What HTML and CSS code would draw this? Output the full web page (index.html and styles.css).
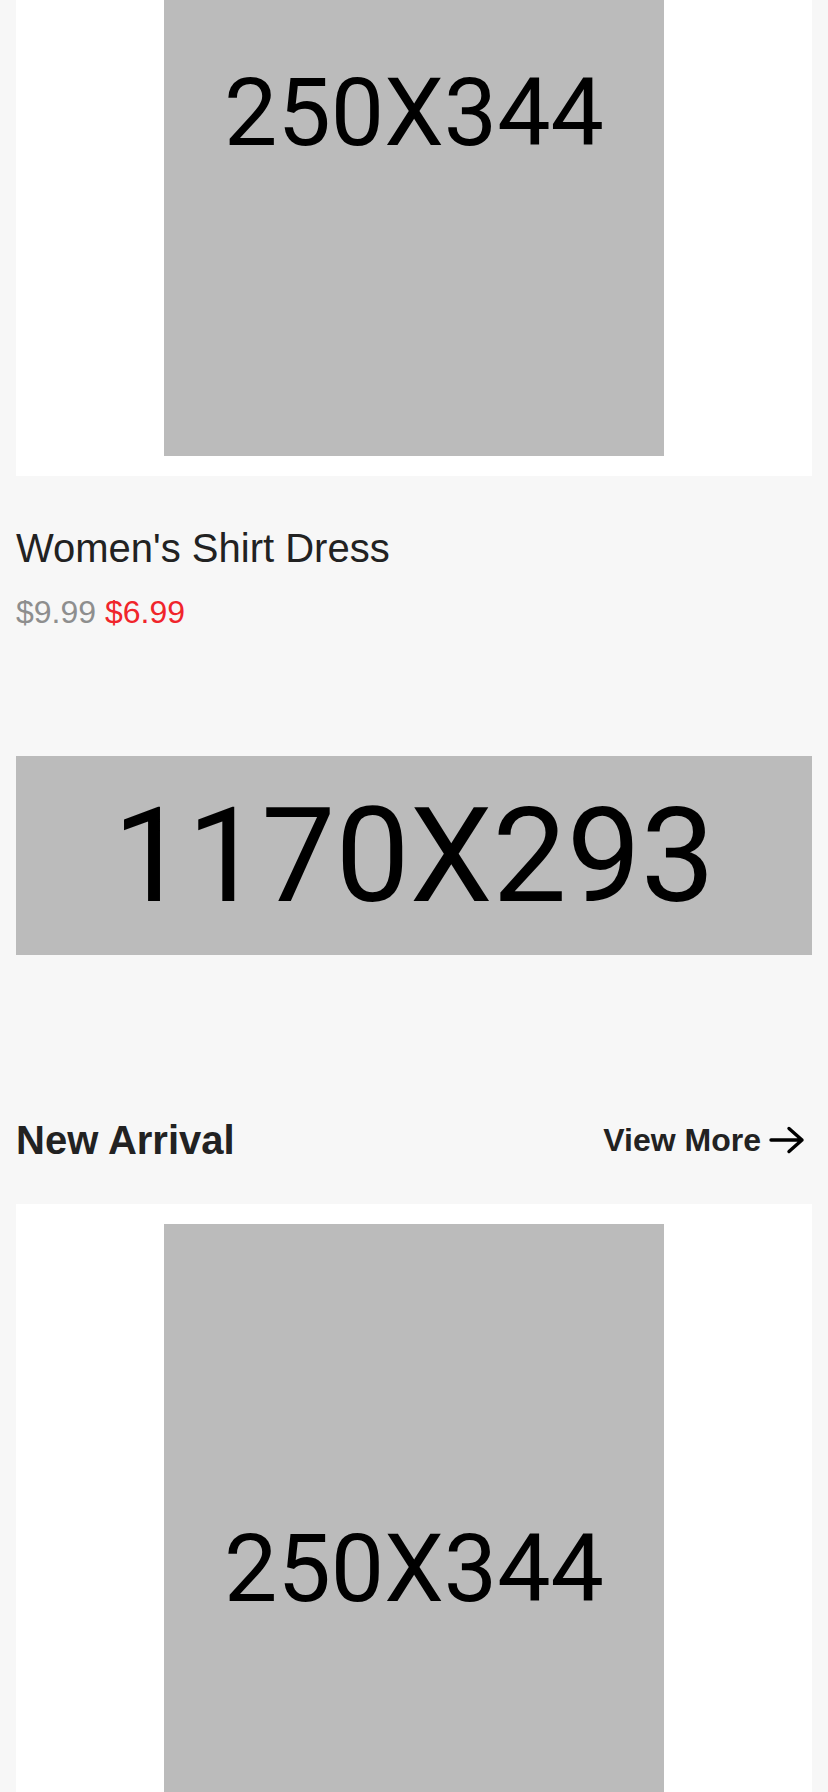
FILE: index.html
```html
<!DOCTYPE html>
<html lang="en">
<head>
<meta charset="utf-8">
<title>Shop</title>
<link rel="stylesheet" href="styles.css">
</head>
<body>
<main class="page">
  <section class="product product--scrolled">
    <div class="product-card">
      <div class="placeholder placeholder--tall"><span>250X344</span></div>
    </div>
    <h3 class="product-name">Women's Shirt Dress</h3>
    <p class="product-price"><span class="price-old">$9.99</span> <span class="price-new">$6.99</span></p>
  </section>

  <section class="banner"><span>1170X293</span></section>

  <section class="arrivals">
    <div class="section-head">
      <h2 class="section-title">New Arrival</h2>
      <a class="view-more" href="#">View More
        <svg class="arrow" width="36" height="28" viewBox="0 0 36 28" aria-hidden="true">
          <path d="M2 14 H33 M20 2.5 L33 14 L20 25.5" fill="none" stroke="#000" stroke-width="3.4" stroke-linecap="round" stroke-linejoin="round"/>
        </svg>
      </a>
    </div>
    <div class="product-card">
      <div class="placeholder placeholder--tall"><span>250X344</span></div>
    </div>
  </section>
</main>
</body>
</html>
```

FILE: styles.css
```css
* { box-sizing: border-box; }

html, body {
  margin: 0;
  padding: 0;
  background: #f7f7f7;
  font-family: "Liberation Sans", Arial, sans-serif;
  color: #222;
  overflow: hidden;
}

.page {
  padding: 0 16px;
}

.product--scrolled {
  margin-top: -252px;
}

.product-card {
  background: #fff;
  padding: 20px;
  display: flex;
  justify-content: center;
}

.placeholder {
  background: #bbbbbb;
  color: #000;
  font-family: Roboto, "Liberation Sans", sans-serif;
  display: flex;
  align-items: center;
  justify-content: center;
}

.placeholder--tall {
  width: 500px;
  height: 688px;
  font-size: 95px;
}

.product-name {
  margin: 48px 0 21px;
  font-size: 40px;
  line-height: 48px;
  font-weight: 400;
  color: #222;
}

.product-price {
  margin: 0;
  font-size: 32px;
  line-height: 38px;
}

.price-old { color: #8e8e8e; }
.price-new { color: #f0252b; }

.banner {
  margin-top: 125px;
  aspect-ratio: 1170 / 293;
  background: #bbbbbb;
  color: #000;
  font-family: Roboto, "Liberation Sans", sans-serif;
  display: flex;
  align-items: center;
  justify-content: center;
  font-size: 132px;
  line-height: 1;
}

.arrivals {
  margin-top: 161px;
}

.section-head {
  display: flex;
  align-items: center;
  justify-content: space-between;
  height: 48px;
  margin-bottom: 40px;
}

.section-title {
  margin: 0;
  font-size: 40px;
  line-height: 48px;
  font-weight: 700;
  color: #222;
}

.view-more {
  display: flex;
  align-items: center;
  gap: 8px;
  font-size: 32px;
  line-height: 48px;
  font-weight: 700;
  color: #222;
  text-decoration: none;
  margin-right: 7px;
}

.arrow {
  display: block;
}
```
